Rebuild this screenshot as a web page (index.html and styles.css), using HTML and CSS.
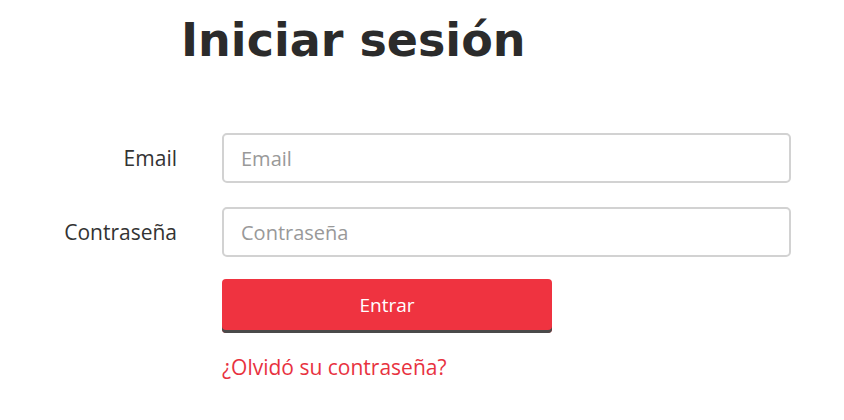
FILE: index.html
```html
<!DOCTYPE html>
<html lang="es">
<head>
<meta charset="utf-8">
<title>Iniciar sesión</title>
<link rel="stylesheet" href="styles.css">
</head>
<body>
<main class="page">
  <h1 class="title">Iniciar sesión</h1>
  <form class="form">
    <label class="label" for="email">Email</label>
    <input class="input" id="email" type="email" placeholder="Email">
    <label class="label" for="pass">Contraseña</label>
    <input class="input" id="pass" type="password" placeholder="Contraseña">
    <div class="spacer"></div>
    <div class="actions">
      <button class="btn" type="button">Entrar</button>
      <a class="link" href="#">¿Olvidó su contraseña?</a>
    </div>
  </form>
</main>
</body>
</html>
```
FILE: styles.css
```css
html, body {
  margin: 0;
  padding: 0;
  background: #fff;
}
.page {
  font-family: "Open Sans", "Noto Sans", sans-serif;
  color: #333;
}
.title {
  margin: 0;
  padding: 12px 0 0 181px;
  font-family: "DejaVu Sans", Verdana, sans-serif;
  font-weight: bold;
  font-size: 46px;
  line-height: 56px;
  color: #2b2b2b;
}
.form {
  display: grid;
  grid-template-columns: 177px 569px;
  column-gap: 45px;
  row-gap: 24px;
  margin-top: 65px;
  align-items: center;
}
.label {
  text-align: right;
  font-size: 21px;
  color: #333;
}
.input {
  box-sizing: border-box;
  height: 50px;
  width: 100%;
  border: 2px solid #d2d2d2;
  border-radius: 5px;
  padding: 0 17px;
  font-family: inherit;
  font-size: 20px;
  color: #333;
  outline: none;
}
.input::placeholder {
  color: #999;
}
.actions {
  display: flex;
  flex-direction: column;
  align-items: flex-start;
  gap: 20px;
  margin-top: -2px;
}
.btn {
  box-sizing: border-box;
  width: 330px;
  height: 54px;
  border: none;
  border-radius: 4px;
  background: #ef3340;
  box-shadow: inset 0 -3px 0 #4a4a4a;
  color: #fff;
  font-family: inherit;
  font-size: 19px;
  padding: 0 0 3px;
}
.link {
  color: #e8323f;
  font-size: 21px;
  text-decoration: none;
}
```
